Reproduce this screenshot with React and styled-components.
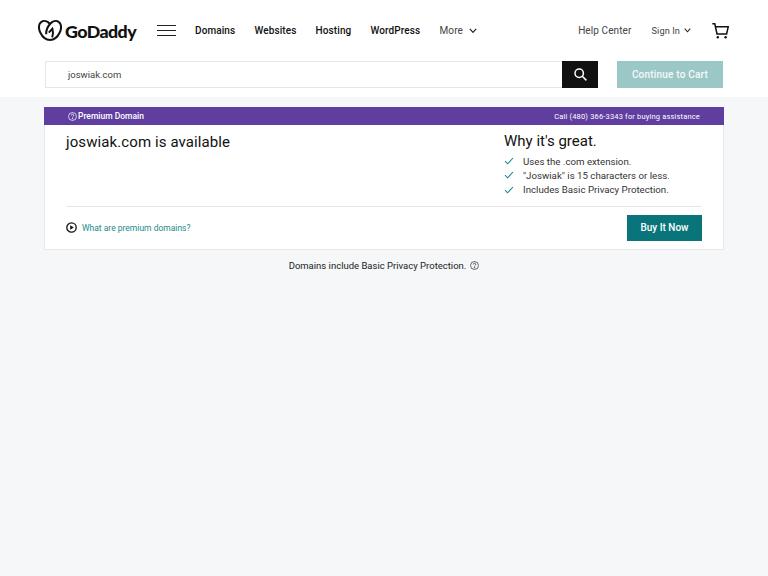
import React from "react";
import styled, { createGlobalStyle } from "styled-components";

const GlobalStyle = createGlobalStyle`
  html, body {
    margin: 0;
    padding: 0;
    background: #f5f7f8;
    font-family: "Roboto", "Liberation Sans", sans-serif;
    color: #111;
  }
`;

const CheckIcon = () => (
  <svg width="10" height="8" viewBox="0 0 10 8" fill="none" stroke="#1b8a8a" strokeWidth="1.1">
    <path d="M1 4.2 L3.6 6.8 L9 1" />
  </svg>
);

const Chevron = ({ size = 8 }) => (
  <svg width={size} height={size * 0.7} viewBox="0 0 10 7" fill="none" stroke="#222" strokeWidth="1.5">
    <path d="M1 1 L5 5.4 L9 1" />
  </svg>
);

const HelpIcon = ({ color = "#333" }) => (
  <svg width="9" height="9" viewBox="0 0 10 10" fill="none" stroke={color} strokeWidth="0.8">
    <circle cx="5" cy="5" r="4.4" />
    <path d="M3.6 3.9 A1.4 1.4 0 1 1 5.6 5.1 C5.1 5.4 5 5.6 5 6.2" />
    <circle cx="5" cy="7.5" r="0.35" fill={color} />
  </svg>
);

const Logo = () => (
  <LogoWrap>
    <svg width="24" height="21" viewBox="0 0 24 21" fill="none" stroke="#111" strokeWidth="2">
      <path d="M12 4 C9.6 1.2 6 0.2 3.4 1.8 C0.4 3.7 0.2 8.4 2.4 12.8 C4.4 16.9 7.8 19.9 12 20 C16.2 19.9 19.6 16.9 21.6 12.8 C23.8 8.4 23.6 3.7 20.6 1.8 C18 0.2 14.4 1.2 12 4 C9.6 6.8 8 10.4 8.2 14.2" />
      <path d="M10.8 12.6 L14.4 8.8 C15.2 11.4 15.2 14.6 14.2 17.4" />
    </svg>
    <LogoText>GoDaddy</LogoText>
  </LogoWrap>
);

const App = () => {
  return (
    <>
      <GlobalStyle />
      <Header>
        <TopRow>
          <Logo />
          <Burger>
            <span />
            <span />
            <span />
          </Burger>
          <NavLink>Domains</NavLink>
          <NavLink>Websites</NavLink>
          <NavLink>Hosting</NavLink>
          <NavLink>WordPress</NavLink>
          <MoreLink>
            More <Chevron />
          </MoreLink>
          <RightNav>
            <UtilLink>Help Center</UtilLink>
            <SignIn>
              Sign In <Chevron size={7} />
            </SignIn>
            <svg width="17" height="16" viewBox="0 0 17 16" fill="none" stroke="#111" strokeWidth="1.5">
              <path d="M0.3 0.8 L2.8 0.8 L5 11 L14.6 11 L16.2 3.8 L3.5 3.8" />
              <circle cx="5.8" cy="14.3" r="1.2" fill="#111" stroke="none" />
              <circle cx="13.6" cy="14.3" r="1.2" fill="#111" stroke="none" />
            </svg>
          </RightNav>
        </TopRow>
        <SearchRow>
          <SearchBox>
            <SearchInput>joswiak.com</SearchInput>
            <SearchButton>
              <svg width="13" height="13" viewBox="0 0 13 13" fill="none" stroke="#fff" strokeWidth="1.5">
                <circle cx="5.2" cy="5.2" r="4.2" />
                <path d="M8.3 8.3 L12.4 12.4" />
              </svg>
            </SearchButton>
          </SearchBox>
          <CartButton>Continue to Cart</CartButton>
        </SearchRow>
      </Header>
      <Main>
        <Card>
          <Banner>
            <BannerLeft>
              <HelpIcon color="#fff" />
              Premium Domain
            </BannerLeft>
            <BannerRight>Call (480) 366-3343 for buying assistance</BannerRight>
          </Banner>
          <CardBody>
            <Title>joswiak.com is available</Title>
            <Reasons>
              <ReasonsTitle>Why it's great.</ReasonsTitle>
              <Reason>
                <CheckIcon />
                Uses the .com extension.
              </Reason>
              <Reason>
                <CheckIcon />
                "Joswiak" is 15 characters or less.
              </Reason>
              <Reason>
                <CheckIcon />
                Includes Basic Privacy Protection.
              </Reason>
            </Reasons>
          </CardBody>
          <CardFooter>
            <VideoLink>
              <svg width="11" height="11" viewBox="0 0 11 11">
                <circle cx="5.5" cy="5.5" r="4.7" fill="none" stroke="#111" strokeWidth="1.3" />
                <path d="M4.2 3.3 L7.8 5.5 L4.2 7.7 Z" fill="#111" />
              </svg>
              What are premium domains?
            </VideoLink>
            <BuyButton>Buy It Now</BuyButton>
          </CardFooter>
        </Card>
        <Note>
          Domains include Basic Privacy Protection.
          <HelpIcon />
        </Note>
      </Main>
    </>
  );
};

export default App;

const Header = styled.header`
  height: 97px;
  background: #fff;
`;

const TopRow = styled.div`
  display: flex;
  align-items: center;
  height: 61px;
  padding: 0 39px 0 38px;
`;

const LogoWrap = styled.div`
  display: flex;
  align-items: center;
  gap: 3px;
  width: 119px;
`;

const LogoText = styled.span`
  font-family: "Lato", sans-serif;
  font-size: 17.8px;
  font-weight: 900;
  letter-spacing: -0.55px;
  color: #111;
`;

const Burger = styled.div`
  display: flex;
  flex-direction: column;
  gap: 4px;
  width: 19px;
  margin-right: 19px;
  span {
    display: block;
    height: 1px;
    background: #222;
  }
`;

const NavLink = styled.span`
  font-size: 10px;
  font-weight: 500;
  letter-spacing: 0.1px;
  color: #111;
  margin-right: 19.2px;
`;

const MoreLink = styled.span`
  display: flex;
  align-items: center;
  gap: 6px;
  font-size: 10px;
  color: #444;
  letter-spacing: 0.1px;
`;

const RightNav = styled.div`
  display: flex;
  align-items: center;
  margin-left: auto;
  gap: 20px;
`;

const UtilLink = styled.span`
  font-size: 10px;
  color: #444;
  letter-spacing: 0.1px;
`;

const SignIn = styled(UtilLink)`
  display: flex;
  align-items: center;
  gap: 4px;
  margin-right: 1px;
  font-size: 9.2px;
`;

const SearchRow = styled.div`
  display: flex;
  padding: 0 45px;
  justify-content: space-between;
`;

const SearchBox = styled.div`
  display: flex;
  width: 553px;
  height: 27px;
`;

const SearchInput = styled.div`
  flex: 1;
  display: flex;
  align-items: center;
  padding-left: 22px;
  border: 1px solid #e6e6e6;
  border-right: none;
  font-size: 9.5px;
  color: #444;
`;

const SearchButton = styled.div`
  display: flex;
  align-items: center;
  justify-content: center;
  width: 36px;
  background: #111;
`;

const CartButton = styled.div`
  display: flex;
  align-items: center;
  justify-content: center;
  width: 106px;
  height: 27px;
  background: #9cc7c7;
  color: #f4fafa;
  font-size: 10px;
  font-weight: 500;
  letter-spacing: 0.2px;
`;

const Main = styled.main`
  padding: 10px 44px 0;
`;

const Card = styled.section`
  background: #fff;
  border: 1px solid #e6e8ea;
  border-top: none;
  height: 143px;
  box-sizing: border-box;
`;

const Banner = styled.div`
  display: flex;
  align-items: center;
  justify-content: space-between;
  height: 18px;
  margin: 0 -1px;
  padding: 0 24px;
  background: #603ea0;
  color: #fff;
`;

const BannerLeft = styled.div`
  display: flex;
  align-items: center;
  gap: 1px;
  font-size: 8.5px;
  font-weight: 500;
`;

const BannerRight = styled.div`
  font-size: 7.5px;
  letter-spacing: 0.17px;
`;

const CardBody = styled.div`
  display: flex;
  justify-content: space-between;
  height: 81px;
  margin: 0 21px;
  border-bottom: 1px solid #e6e6e6;
`;

const Title = styled.h1`
  margin: 7px 0 0;
  font-size: 15px;
  letter-spacing: 0.1px;
  line-height: 20px;
  font-weight: 400;
  color: #111;
`;

const Reasons = styled.div`
  width: 198px;
  padding-top: 7px;
`;

const ReasonsTitle = styled.h2`
  margin: 0 0 4px;
  font-size: 15px;
  line-height: 18px;
  font-weight: 400;
  color: #111;
`;

const Reason = styled.div`
  display: flex;
  align-items: center;
  gap: 9px;
  height: 14.3px;
  font-size: 9.7px;
  color: #333;
`;

const CardFooter = styled.div`
  display: flex;
  align-items: center;
  justify-content: space-between;
  height: 41px;
  margin: 0 21px;
`;

const VideoLink = styled.div`
  display: flex;
  align-items: center;
  gap: 5px;
  font-size: 8.5px;
  color: #1b8a8a;
`;

const BuyButton = styled.div`
  display: flex;
  align-items: center;
  justify-content: center;
  width: 75px;
  height: 26px;
  background: #09757a;
  color: #fff;
  font-size: 10px;
  font-weight: 500;
`;

const Note = styled.div`
  display: flex;
  align-items: center;
  justify-content: center;
  gap: 4px;
  margin-top: 10px;
  font-size: 9.5px;
  color: #222;
`;
